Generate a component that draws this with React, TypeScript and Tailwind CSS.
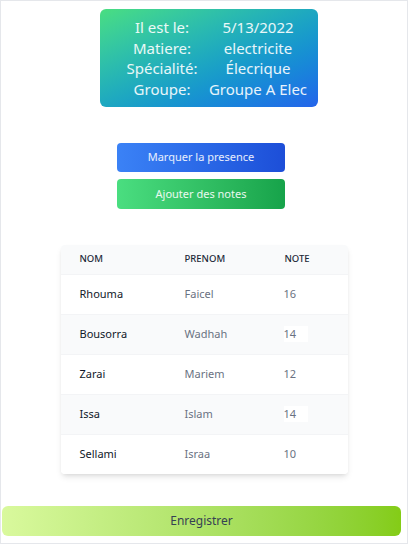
import React from "react";

const students = [
  { nom: "Rhouma", prenom: "Faicel", note: "16" },
  { nom: "Bousorra", prenom: "Wadhah", note: "14" },
  { nom: "Zarai", prenom: "Mariem", note: "12" },
  { nom: "Issa", prenom: "Islam", note: "14" },
  { nom: "Sellami", prenom: "Israa", note: "10" },
];

const info = [
  ["Il est le:", "5/13/2022"],
  ["Matiere:", "electricite"],
  ["Spécialité:", "Élecrique"],
  ["Groupe:", "Groupe A Elec"],
];

export default function App() {
  return (
    <div
      className="w-[408px] h-[544px] border border-gray-200 bg-white flex flex-col items-center"
      style={{ fontFamily: '"Noto Sans", sans-serif' }}>
      {/* info card */}
      <div className="mt-[8px] ml-[10px] w-[218px] h-[98px] rounded-md bg-gradient-to-br from-[#4ade80] to-[#2563eb] flex flex-col justify-center text-white/90 text-[15px] leading-[20.5px]">
        {info.map(([label, value]) => (
          <div key={label} className="flex">
            <div className="w-[124px] text-center">{label}</div>
            <div className="w-[68px] flex justify-center whitespace-nowrap">{value}</div>
          </div>
        ))}
      </div>

      {/* actions */}
      <div className="mt-[36px] mr-[6px] flex flex-col gap-[7px]">
        <button className="w-[168px] h-[29px] rounded bg-gradient-to-r from-[#3b82f6] to-[#1d4ed8] text-white/90 text-[11px]">
          Marquer la presence
        </button>
        <button className="w-[168px] h-[30px] rounded bg-gradient-to-r from-[#4ade80] to-[#16a34a] text-white/90 text-[11px]">
          Ajouter des notes
        </button>
      </div>

      {/* students table */}
      <div className="mt-[36px] w-[287px] shadow-md rounded-sm overflow-hidden">
        <table className="w-full text-left text-[11px]">
          <thead className="bg-gray-50">
            <tr className="h-[29px] text-[9.5px] uppercase text-gray-800">
              <th className="pl-[19px] w-[104px] font-medium">Nom</th>
              <th className="pl-[20px] w-[100px] font-medium">Prenom</th>
              <th className="pl-[20px] font-medium">Note</th>
            </tr>
          </thead>
          <tbody>
            {students.map((s, i) => (
              <tr
                key={s.nom}
                className={`h-[40px] border-t border-gray-100 ${i % 2 === 1 ? "bg-gray-50" : "bg-white"}`}>
                <td className="pl-[19px] text-gray-900">{s.nom}</td>
                <td className="pl-[20px] text-gray-500">{s.prenom}</td>
                <td className="pl-[19px] text-gray-500">
                  <span className="inline-block w-[24px] bg-white">{s.note}</span>
                </td>
              </tr>
            ))}
          </tbody>
        </table>
      </div>

      {/* save */}
      <div className="mt-auto mb-[7px] w-full pl-[1px] pr-[6px]">
        <button className="w-full h-[30px] rounded-md bg-gradient-to-r from-[#d9f99d] to-[#84cc16] text-gray-700 text-[12px]">
          Enregistrer
        </button>
      </div>
    </div>
  );
}
